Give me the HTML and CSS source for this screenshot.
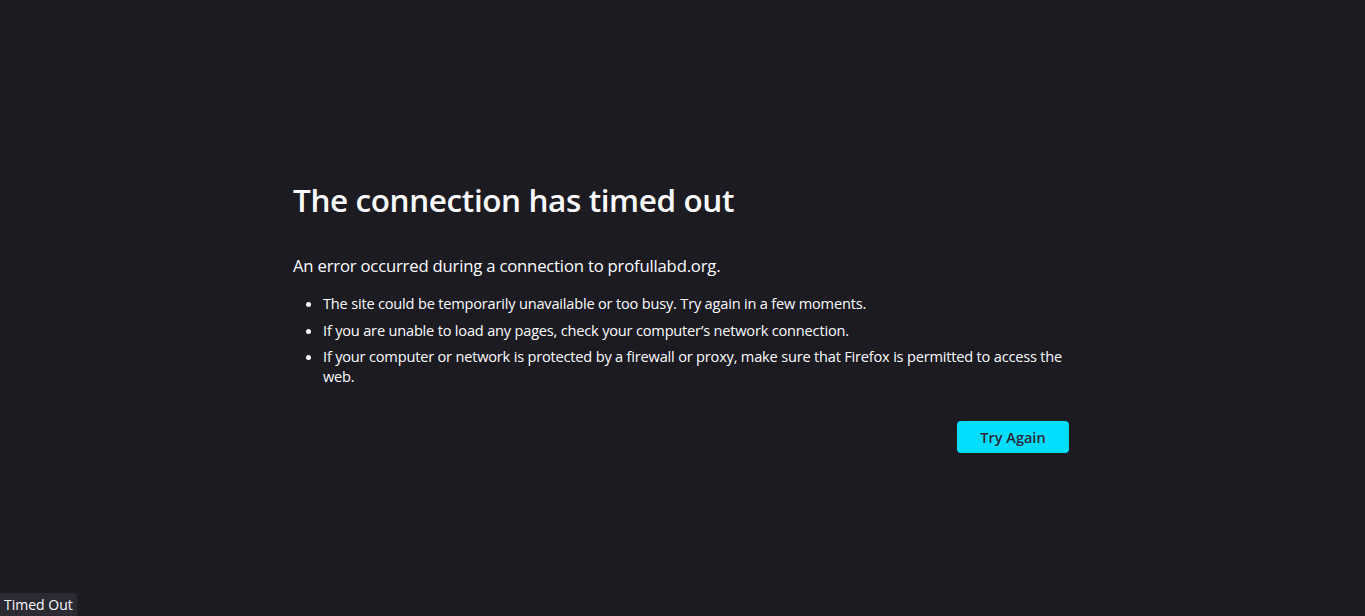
FILE: index.html
```html
<!DOCTYPE html>
<html lang="en">
<head>
<meta charset="utf-8">
<title>Problem loading page</title>
<link rel="stylesheet" href="styles.css">
</head>
<body>
<main class="page">
  <div class="container">
    <h1 class="title">The connection has timed out</h1>
    <p class="intro">An error occurred during a connection to profullabd.org.</p>
    <ul class="reasons">
      <li>The site could be temporarily unavailable or too busy. Try again in a few moments.</li>
      <li>If you are unable to load any pages, check your computer’s network connection.</li>
      <li>If your computer or network is protected by a firewall or proxy, make sure that Firefox is permitted to access the web.</li>
    </ul>
    <div class="actions">
      <button class="try-again">Try Again</button>
    </div>
  </div>
</main>
<div class="status">Timed Out</div>
</body>
</html>
```
FILE: styles.css
```css
html, body {
  margin: 0;
  height: 100%;
}
body {
  background: #1c1b22;
  color: #fbfbfe;
  font-family: "Open Sans", "Noto Sans", sans-serif;
  overflow: hidden;
}
.page {
  padding-top: 176px;
}
.container {
  width: 776px;
  margin-left: 293px;
}
.title {
  margin: 0;
  font-size: 31.5px;
  font-weight: 600;
  line-height: 48px;
  letter-spacing: -0.4px;
}
.intro {
  margin: 30px 0 0;
  font-size: 16.7px;
  line-height: 24px;
  letter-spacing: -0.2px;
}
.reasons {
  margin: 15px 0 0;
  padding-left: 30px;
  font-size: 14.6px;
  line-height: 20px;
  letter-spacing: -0.2px;
}
.reasons li {
  margin-bottom: 6.5px;
}
.actions {
  display: flex;
  justify-content: flex-end;
  margin-top: 35px;
}
.try-again {
  width: 112px;
  height: 32px;
  border: 0;
  border-radius: 4px;
  background: #00ddff;
  color: #2b2a33;
  font-family: inherit;
  font-size: 14.5px;
  font-weight: 600;
  padding: 0;
}
.status {
  position: fixed;
  left: 0;
  bottom: 0;
  height: 23px;
  padding: 0 4px;
  background: #2b2a33;
  color: #fbfbfe;
  font-size: 14px;
  line-height: 23px;
  border-top-right-radius: 3px;
}
```
